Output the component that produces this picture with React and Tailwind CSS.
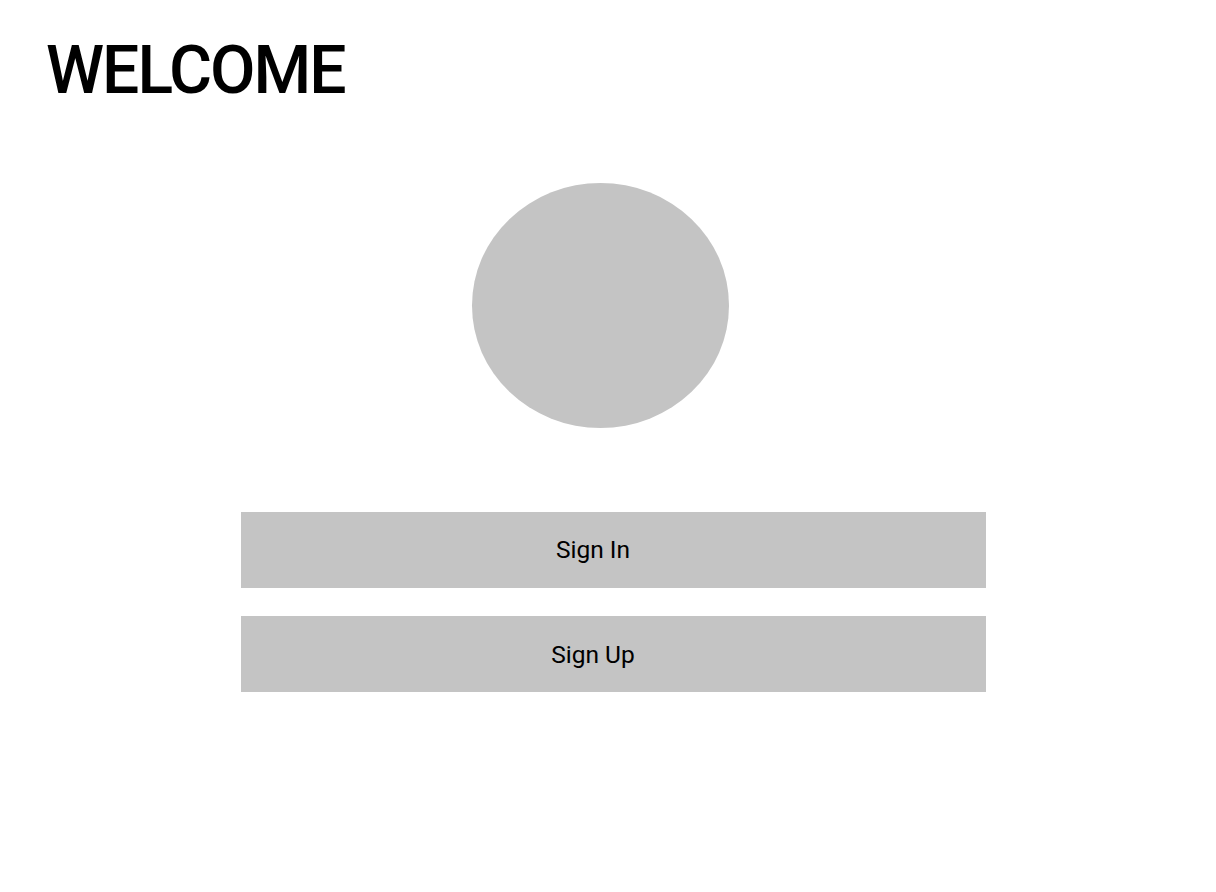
import React from 'react';

const App = () => {
  return (
    <div className="w-[1216px] h-[892px] bg-white font-['Roboto',sans-serif] text-black">
      <h1 className="pl-[46px] pt-[32px] text-[66px] leading-[78px] font-medium tracking-[-2px]">WELCOME</h1>

      <div className="flex justify-center pt-[73px]">
        <div className="ml-[-15px] w-[257px] h-[245px] rounded-[50%] bg-[#c4c4c4]" />
      </div>

      <div className="pt-[84px] pl-[241px] flex flex-col gap-[28px]">
        <button className="w-[745px] h-[76px] bg-[#c4c4c4] flex items-center justify-center pr-[41px] pt-[1px] text-[24.5px]">
          Sign In
        </button>
        <button className="w-[745px] h-[76px] bg-[#c4c4c4] flex items-center justify-center pr-[41px] pt-[3px] text-[24.5px]">
          Sign Up
        </button>
      </div>
    </div>
  );
};

export default App;
